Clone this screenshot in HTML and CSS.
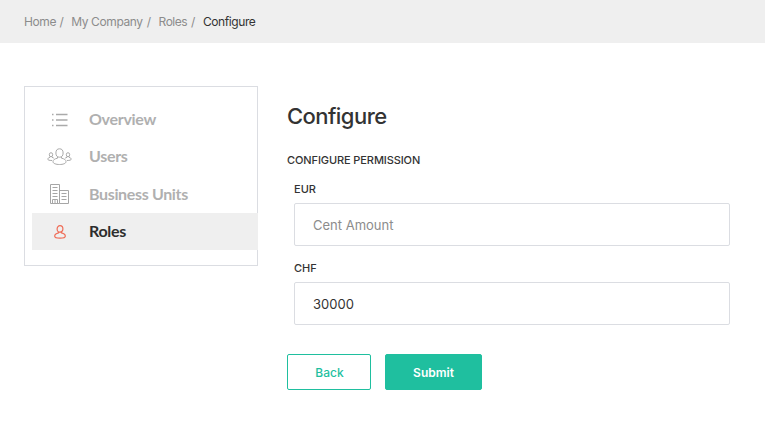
FILE: index.html
```
<!DOCTYPE html>
<html lang="en">
<head>
<meta charset="utf-8">
<title>Configure</title>
<link rel="stylesheet" href="styles.css">
</head>
<body>
<nav class="breadcrumb">
  <span class="crumb home">Home</span><span class="sep">/</span>
  <span class="crumb company">My Company</span><span class="sep">/</span>
  <span class="crumb roles">Roles</span><span class="sep">/</span>
  <span class="crumb current">Configure</span>
</nav>
<div class="layout">
  <aside class="menu">
    <a class="item"><span class="icon"><svg width="16" height="14" viewBox="0 0 16 14" stroke="#aaa" fill="none"><path d="M0 1.5h1.500M4 1.500h11.500M0 7h1.500M4 7h11.500M0 12.500h1.500M4 12.500h11.500" stroke-width="1.5"/></svg></span><span class="label overview">Overview</span></a>
    <a class="item"><span class="icon"><svg width="26" height="18" viewBox="0 0 26 18" stroke="#aaa" fill="none" stroke-width="1"><ellipse cx="12.5" cy="5" rx="3.6" ry="4.2"/><path d="M10.5 9v1.2c-3 .7-4.500 1.500-4.500 3.500 0 1.800 3 2.800 6.500 2.800s6.500-1 6.500-2.800c0-2-1.500-2.800-4.500-3.500V9"/><ellipse cx="4" cy="6.700" rx="1.700" ry="2"/><ellipse cx="21" cy="6.700" rx="1.700" ry="2"/><path d="M3 8.500v.8C1.500 9.800.8 10.300.8 11.200c0 .8 1.400 1.300 4.200 1.300M5 8.500v.8l1.800.8M22 8.500v.8c1.500.5 2.200 1 2.200 1.900 0 .8-1.400 1.300-4.200 1.300M20 8.500v.8l-1.800.8"/></svg></span><span class="label users">Users</span></a>
    <a class="item"><span class="icon"><svg width="20" height="20" viewBox="0 0 20 20" stroke="#a6a6a6" fill="none"><path d="M.5.5h9v19h-9zM9.500 6.500h9v13h-9M2.500 3.500h5M2.500 6.500h5M2.500 9.500h5M2.500 12.500h5M11.500 9.500h5M11.500 12.500h5M11.500 15.500h5M2.500 19.500v-4h5v4M5 15.500v4"/></svg></span><span class="label units">Business Units</span></a>
    <a class="item active"><span class="icon"><svg width="12" height="14" viewBox="0 0 12 14" stroke="#ef6c57" fill="none" stroke-width="1.200"><ellipse cx="6" cy="3.900" rx="2.900" ry="3.300"/><path d="M4.500 6.900v1C2.200 8.500.7 9.300.7 11.200c0 1.400 1.600 1.900 5.300 1.900s5.300-.5 5.300-1.900c0-1.900-1.500-2.700-3.800-3.300v-1"/></svg></span><span class="label role">Roles</span></a>
  </aside>
  <main class="content">
    <h1>Configure</h1>
    <h2>CONFIGURE PERMISSION</h2>
    <form class="fields">
      <label for="eur" class="eur">EUR</label>
      <input id="eur" type="text" placeholder="Cent Amount">
      <label for="chf" class="chf">CHF</label>
      <input id="chf" type="text" value="30000">
    </form>
    <div class="actions">
      <button class="back">Back</button>
      <button class="submit">Submit</button>
    </div>
  </main>
</div>
</body>
</html>
```
FILE: styles.css
```
* { box-sizing: border-box; }
body { margin: 0; background: #fff; color: #333; font-family: Inter, "Liberation Sans", sans-serif; }
.breadcrumb { height: 43px; padding-left: 24px; background: #efefef; display: flex; align-items: center; font-size: 12px; line-height: 16px; color: #8c8c8c; white-space: nowrap; }
.crumb { flex: none; }
.home { width: 32px; letter-spacing: -.4px; }
.company { width: 72px; letter-spacing: -.4px; }
.roles { width: 29px; letter-spacing: -.5px; }
.current { color: #333; letter-spacing: -.4px; }
.sep { width: 15.300px; padding-left: 3.500px; }
.layout { display: flex; align-items: flex-start; }
.menu { width: 234px; height: 180px; margin: 43px 0 0 24px; padding: 14px 0 0 7px; border: 1px solid #dbdde2; }
.item { height: 37.300px; margin-right: -1px; display: flex; align-items: center; color: #b0b0b0; font: bold 16px/20px Lato, sans-serif; }
.icon { width: 56px; display: flex; justify-content: center; flex: none; }
.label { padding: 0 0 1px 1px; white-space: nowrap; letter-spacing: -.3px; }
.units { letter-spacing: -.35px; padding-bottom: 0; }
.active { background: #efefef; color: #2d2d2d; }
.content { width: 443px; margin-left: 29px; }
h1 { margin: 58px 0 0; font-size: 22px; line-height: 30px; font-weight: 500; letter-spacing: -.55px; }
h2 { margin: 21px 0 0; font-size: 11px; line-height: 16px; font-weight: 500; letter-spacing: -.1px; }
.fields { padding-left: 7px; display: flex; flex-direction: column; }
label { font-size: 11px; line-height: 16px; font-weight: 500; margin: 13px 0 6px; }
.chf { margin-top: 14px; }
input { height: 43px; width: 436px; padding: 0 18px; border: 1px solid #dbdde2; border-radius: 2px; font: 13px Inter, sans-serif; color: #333; outline: 0; }
input::placeholder { color: #8c8c8c; opacity: 1; }
.actions { display: flex; gap: 14px; margin-top: 29px; }
button { height: 36px; padding: 0; border: 1px solid #1fbf9f; border-radius: 2px; font: 500 12px Inter, sans-serif; }
.back { width: 84px; padding-left: 1px; background: #fff; color: #1fbf9f; }
.submit { width: 97px; background: #1fbf9f; color: #fff; font-weight: 600; }
```
